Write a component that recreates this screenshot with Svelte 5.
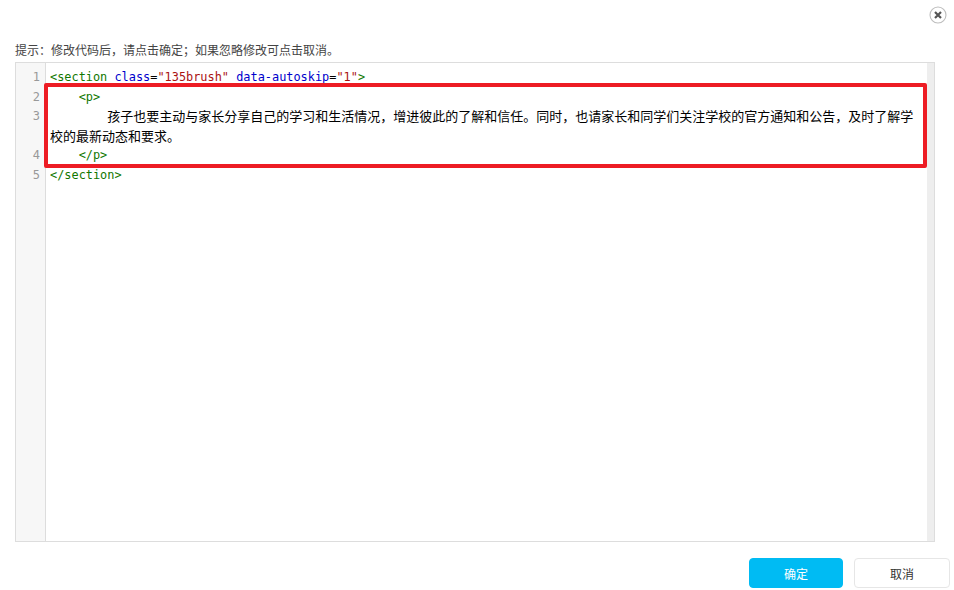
<script>
    const para = '孩子也要主动与家长分享自己的学习和生活情况，增进彼此的了解和信任。同时，也请家长和同学们关注学校的官方通知和公告，及时了解学校的最新动态和要求。'
</script>

<div class="dialog">
    <div class="top">
        <button class="close" aria-label="关闭">
            <svg width="18" height="18" viewBox="0 0 18 18">
                <circle cx="9" cy="9" r="8" fill="#fff" stroke="#bdbdbd" stroke-width="1.1"/>
                <path d="M6 6l6 6M12 6l-6 6" stroke="#555" stroke-width="2.2" fill="none"/>
            </svg>
        </button>
    </div>
    <p class="tip">提示：修改代码后，请点击确定；如果忽略修改可点击取消。</p>
    <div class="editor">
        <div class="code">
            <div class="line"><span class="num">1</span><pre><span class="tag">&lt;section</span> <span class="attr">class</span>=<span class="str">"135brush"</span> <span class="attr">data-autoskip</span>=<span class="str">"1"</span><span class="tag">&gt;</span></pre></div>
            <div class="line"><span class="num">2</span><pre>    <span class="tag">&lt;p&gt;</span></pre></div>
            <div class="line"><span class="num">3</span><pre>        <span class="cjk">{para}</span></pre></div>
            <div class="line"><span class="num">4</span><pre>    <span class="tag">&lt;/p&gt;</span></pre></div>
            <div class="line"><span class="num">5</span><pre><span class="tag">&lt;/section&gt;</span></pre></div>
            <div class="rest"></div>
        </div>
        <div class="scroll"></div>
        <div class="mark"></div>
    </div>
    <div class="actions">
        <button class="btn ok">确定</button>
        <button class="btn cancel">取消</button>
    </div>
</div>

<style>
    :global(body){
        background: #fff;
    }
    .dialog{
        width: 954px;
        height: 590px;
        box-sizing: border-box;
        padding: 6px 4px 0 15px;
        font-family: "Liberation Sans", "Noto Sans CJK SC", sans-serif;
        overflow: hidden;
    }
    .top{
        height: 18px;
        display: flex;
        justify-content: flex-end;
        padding-right: 3px;
    }
    .close{
        width: 18px;
        height: 18px;
        padding: 0;
        border: 0;
        background: none;
        display: block;
    }
    .tip{
        margin: 20px 0 0;
        height: 18px;
        line-height: 14px;
        font-size: 12px;
        color: #444;
    }
    .editor{
        position: relative;
        width: 920px;
        height: 480px;
        box-sizing: border-box;
        border: 1px solid #ddd;
        display: flex;
    }
    .code{
        flex: 1;
        display: flex;
        flex-direction: column;
        padding-top: 5px;
        background: linear-gradient(to right, #f7f7f7 29px, #ddd 29px, #ddd 30px, #fff 30px);
        font-family: "DejaVu Sans Mono", "Noto Sans CJK SC", monospace;
        font-size: 11.9px;
        line-height: 19.5px;
    }
    .line{
        display: flex;
    }
    .num{
        width: 24px;
        flex: none;
        text-align: right;
        color: #999;
        font-size: 12px;
    }
    pre{
        margin: 0 12px 0 10px;
        flex: 1;
        font: inherit;
        color: #000;
        white-space: pre-wrap;
        word-break: break-all;
    }
    .cjk{
        font-size: 13px;
        vertical-align: top;
    }
    .rest{
        flex: 1;
    }
    .tag{ color: #170; }
    .attr{ color: #00c; }
    .str{ color: #a11; }
    .scroll{
        width: 7px;
        flex: none;
        background: #eee;
    }
    .mark{
        position: absolute;
        left: 28px;
        top: 20px;
        width: 883px;
        height: 85px;
        box-sizing: border-box;
        border: 4px solid #ed1c24;
        border-radius: 2px;
        pointer-events: none;
    }
    .actions{
        margin-top: 16px;
        display: flex;
        justify-content: flex-end;
        gap: 11px;
    }
    .btn{
        height: 30px;
        box-sizing: border-box;
        border: 1px solid #e6e6e6;
        border-radius: 4px;
        background: #fff;
        color: #333;
        font: inherit;
        font-size: 12px;
        padding: 0;
    }
    .cancel{
        width: 96px;
    }
    .ok{
        width: 94px;
        background: #00bbf3;
        border-color: #00bbf3;
        color: #fff;
    }
</style>
